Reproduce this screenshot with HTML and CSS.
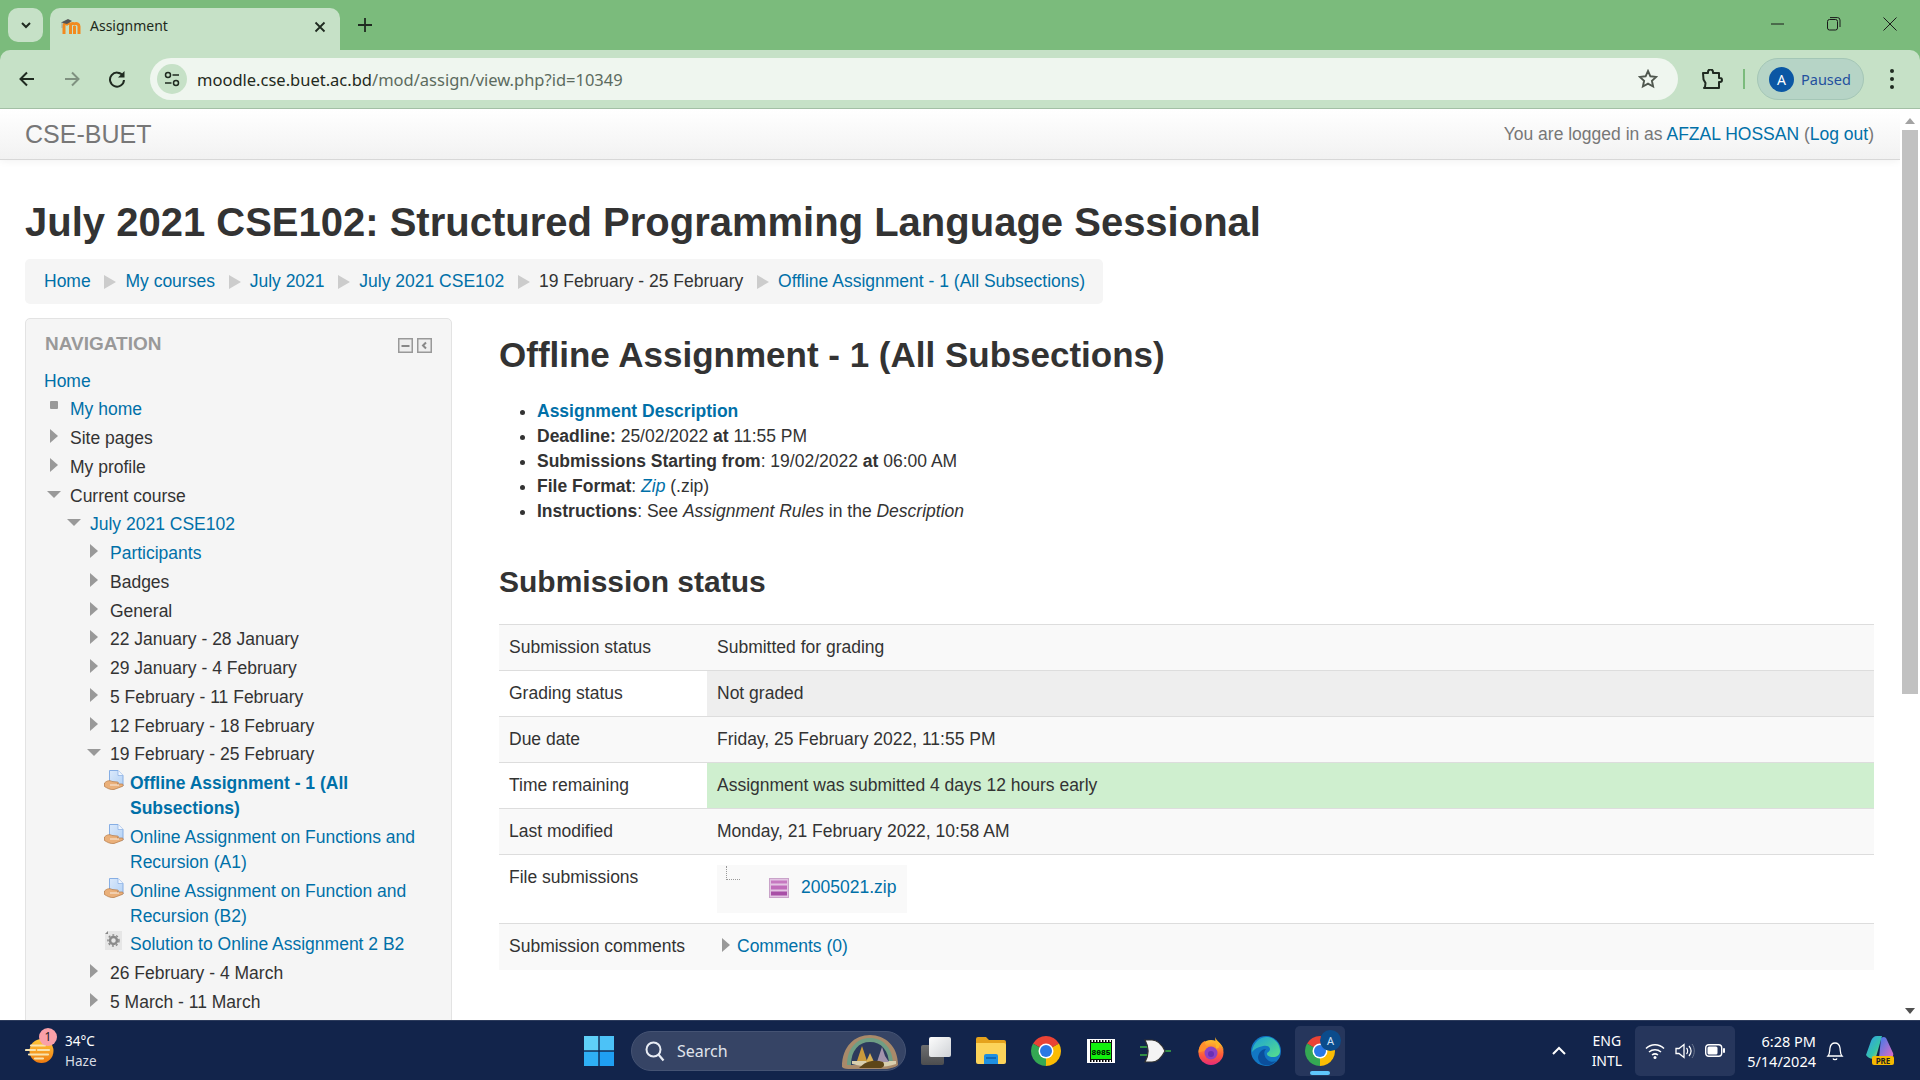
FILE: index.html
```html
<!DOCTYPE html>
<html lang="en">
<head>
<meta charset="utf-8">
<title>Assignment</title>
<link rel="stylesheet" href="styles.css">
</head>
<body>
<svg class="defs" width="0" height="0">
  <defs>
    <linearGradient id="sun" x1="0" y1="0" x2="0" y2="1"><stop offset="0" stop-color="#ffc93a"/><stop offset="1" stop-color="#ee7a10"/></linearGradient>
    <linearGradient id="paper" x1="0" y1="0" x2="1" y2="1"><stop offset="0" stop-color="#dbe9fb"/><stop offset="1" stop-color="#b4d2f5"/></linearGradient>
    <linearGradient id="front" x1="0" y1="0" x2="1" y2="1"><stop offset="0" stop-color="#fdfdfd"/><stop offset="1" stop-color="#cfd2d6"/></linearGradient>
    <linearGradient id="back" x1="0" y1="0" x2="0" y2="1"><stop offset="0" stop-color="#6d6e70"/><stop offset="1" stop-color="#4c4d4f"/></linearGradient>
    <linearGradient id="cpblue" x1="0" y1="0" x2="1" y2="1"><stop offset="0" stop-color="#2f9bf0"/><stop offset=".6" stop-color="#36c4a8"/><stop offset="1" stop-color="#e2d84a"/></linearGradient>
    <linearGradient id="cppink" x1="0" y1="0" x2="1" y2="1"><stop offset="0" stop-color="#3a7bea"/><stop offset="1" stop-color="#e66bc4"/></linearGradient>
    <linearGradient id="edgeg" x1="0" y1="0" x2="1" y2="1"><stop offset="0" stop-color="#1a9fd8"/><stop offset="1" stop-color="#58e08a"/></linearGradient>
    <linearGradient id="foxg" x1="0" y1="0" x2="0" y2="1"><stop offset="0" stop-color="#ffc02c"/><stop offset=".6" stop-color="#ff5a3a"/><stop offset="1" stop-color="#e62b7a"/></linearGradient>
  </defs>
  <symbol id="chrome" viewBox="4 4 40 40">
    <path fill="#ea4335" d="M24 24L6.680 14A20 20 0 0 1 41.320 14Z"/>
    <path fill="#fbbc04" d="M24 24L41.320 14A20 20 0 0 1 24 44Z"/>
    <path fill="#34a853" d="M24 24L24 44A20 20 0 0 1 6.680 14Z"/>
    <circle cx="24" cy="24" r="10" fill="#fff"/>
    <circle cx="24" cy="24" r="8" fill="#2a78e4"/>
  </symbol>
  <symbol id="assign" viewBox="0 0 20 20">
    <path fill="url(#paper)" stroke="#86aee4" d="M5.500.5H14L19 5.500V16H5.500Z"/>
    <path fill="#f2f7fe" stroke="#86aee4" stroke-width=".7" d="M14 .5V5.500H19"/>
    <path fill="#eab07a" stroke="#b5763f" stroke-width=".7" d="M.5 13C3 10.500 6 10 8 11.500L13 12C15 12 15 14 13 14H18C20 14.500 19.500 16 18 16.500L10 19.500C6 20 3 18 .5 16.500Z"/>
    <path d="M6 15h9" stroke="#fff" stroke-width=".8"/>
  </symbol>
</svg>
<div class="browser">
  <div class="tabstrip">
    <div class="tab-search"><svg width="14" height="14" viewBox="0 0 14 14"><path d="M3 5l4 4 4-4" fill="none" stroke="#1f2a20" stroke-width="2"/></svg></div>
    <div class="tab">
      <svg class="favicon" width="21" height="20" viewBox="0 0 21 20">
        <path d="M4 17V8.500c0-2 2-2.500 3-1.500c1-1 2.500-1 3 .5M10.500 17V9c0-2.500 2.500-3 4-2 2-1 4.500 0 4.500 2.500V17M14.500 9v8" fill="none" stroke="#f28a1e" stroke-width="3"/>
        <path d="M1 5.500L8 2l4 2-5 3z" fill="#555"/><path d="M2 5.500V11" stroke="#999" stroke-width=".8"/>
      </svg>
      <span class="tab-title">Assignment</span>
      <svg class="tab-close" width="12" height="12" viewBox="0 0 12 12"><path d="M1.500 1.500l9 9m0-9l-9 9" stroke="#1f2a20" stroke-width="1.800"/></svg>
    </div>
    <svg class="tab-new" width="14" height="14" viewBox="0 0 14 14"><path d="M7 0v14M0 7h14" stroke="#1f2a20" stroke-width="1.800"/></svg>
    <div class="winctl">
      <svg width="14" height="14" viewBox="0 0 14 14"><path d="M0 7h13" stroke="#1a1a1a"/></svg>
      <svg width="14" height="14" viewBox="0 0 14 14"><rect x=".5" y="2.500" width="10" height="10.500" rx="2" fill="none" stroke="#1a1a1a"/><path d="M3 .6h7.500a2.500 2.500 0 0 1 2.500 2.500V10" fill="none" stroke="#1a1a1a"/></svg>
      <svg width="14" height="14" viewBox="0 0 14 14"><path d="M.5.500l13 13m0-13l-13 13" stroke="#1a1a1a"/></svg>
    </div>
  </div>
  <div class="toolbar">
    <svg class="nav-ic" width="18" height="18" viewBox="0 0 18 18"><path d="M16 9H3M9 2.500L2.500 9 9 15.500" fill="none" stroke="#1f2a20" stroke-width="2"/></svg>
    <svg class="nav-ic" width="18" height="18" viewBox="0 0 18 18"><path d="M2 9h13M9 2.500L15.500 9 9 15.500" fill="none" stroke="#7f9180" stroke-width="2"/></svg>
    <svg class="nav-ic" width="18" height="18" viewBox="0 0 18 18"><path d="M15 6a7 7 0 1 0 1 4" fill="none" stroke="#1f2a20" stroke-width="2"/><path d="M16.500 1v6.500H10z" fill="#1f2a20"/></svg>
    <div class="omnibox">
      <div class="siteinfo"><svg width="16" height="16" viewBox="0 0 16 16"><circle cx="4" cy="4" r="2.500" fill="none" stroke="#1f2a20" stroke-width="1.500"/><path d="M8.500 4H15M1 12h6.500" stroke="#1f2a20" stroke-width="1.500"/><circle cx="12" cy="12" r="2.500" fill="none" stroke="#1f2a20" stroke-width="1.500"/></svg></div>
      <span class="url"><span class="url-host">moodle.cse.buet.ac.bd</span>/mod/assign/view.php?id=10349</span>
      <svg class="star" width="20" height="20" viewBox="0 0 20 20"><path d="M10 2l2.400 5.300 5.800.6-4.300 3.900 1.200 5.700L10 14.600 4.900 17.500l1.200-5.700L1.800 7.900l5.800-.6z" fill="none" stroke="#50584f" stroke-width="1.900"/></svg>
    </div>
    <svg class="ext" width="22" height="20" viewBox="0 0 22 20"><path d="M2 4h5V3a2.500 2.500 0 0 1 5 0v1h6v5h1a2 2 0 0 1 0 4h-1v6H3l1-1 .5-4-2-3.500z" fill="none" stroke="#1f2a20" stroke-width="2" stroke-linejoin="round"/></svg>
    <div class="divider"></div>
    <div class="profile"><span class="avatar">A</span><span class="paused">Paused</span></div>
    <div class="menu-dots"><i></i><i></i><i></i></div>
  </div>
</div>
<div class="viewport">
  <div class="page">
    <header class="navbar">
      <a class="brand">CSE-BUET</a>
      <span class="login">You are logged in as <a>AFZAL HOSSAN</a> (<a>Log out</a>)</span>
    </header>
    <div class="wrap">
      <h1 class="title">July 2021 CSE102: Structured Programming Language Sessional</h1>
      <nav class="crumbs">
        <a>Home</a><i class="sep"></i><a>My courses</a><i class="sep"></i><a>July 2021</a><i class="sep"></i><a>July 2021 CSE102</a><i class="sep"></i><span>19 February - 25 February</span><i class="sep"></i><a>Offline Assignment - 1 (All Subsections)</a>
      </nav>
      <div class="columns">
        <aside class="block">
          <div class="block-head">
            <span class="block-title">NAVIGATION</span>
            <span class="block-ctl">
              <svg width="15" height="15" viewBox="0 0 15 15"><rect x=".75" y=".75" width="13.500" height="13.500" fill="#eee" stroke="#999" stroke-width="1.500"/><path d="M3.500 8h8" stroke="#888" stroke-width="2"/></svg>
              <svg width="15" height="15" viewBox="0 0 15 15"><rect x=".75" y=".75" width="13.500" height="13.500" fill="#eee" stroke="#999" stroke-width="1.500"/><path d="M9 4.500L6 7.500l3 3" fill="none" stroke="#888" stroke-width="2"/></svg>
            </span>
          </div>
          <div class="tree-home"><a>Home</a></div>
          <ul class="tree">
            <li class="row"><i class="mark bullet"></i><a>My home</a></li>
            <li class="row"><i class="mark right"></i><span>Site pages</span></li>
            <li class="row"><i class="mark right"></i><span>My profile</span></li>
            <li class="row"><i class="mark down"></i><span>Current course</span></li>
            <li>
              <ul class="tree">
                <li class="row"><i class="mark down"></i><a>July 2021 CSE102</a></li>
                <li>
                  <ul class="tree">
                    <li class="row"><i class="mark right"></i><a>Participants</a></li>
                    <li class="row"><i class="mark right"></i><span>Badges</span></li>
                    <li class="row"><i class="mark right"></i><span>General</span></li>
                    <li class="row"><i class="mark right"></i><span>22 January - 28 January</span></li>
                    <li class="row"><i class="mark right"></i><span>29 January - 4 February</span></li>
                    <li class="row"><i class="mark right"></i><span>5 February - 11 February</span></li>
                    <li class="row"><i class="mark right"></i><span>12 February - 18 February</span></li>
                    <li class="row"><i class="mark down"></i><span>19 February - 25 February</span></li>
                    <li>
                      <ul class="tree">
                        <li class="row"><svg class="act"><use href="#assign"/></svg><a class="strong">Offline Assignment - 1 (All Subsections)</a></li>
                        <li class="row"><svg class="act"><use href="#assign"/></svg><a>Online Assignment on Functions and Recursion (A1)</a></li>
                        <li class="row"><svg class="act"><use href="#assign"/></svg><a>Online Assignment on Function and Recursion (B2)</a></li>
                        <li class="row"><svg class="act" viewBox="0 0 20 20"><path d="M1 3L4 0H18V19H1Z" fill="#e6e6e6"/><path d="M1 3L4 0V3Z" fill="#888"/><circle cx="9.500" cy="9.500" r="3.500" fill="none" stroke="#8a8a8a" stroke-width="2.500"/><circle cx="9.500" cy="9.500" r="5.500" fill="none" stroke="#8a8a8a" stroke-width="1.500" stroke-dasharray="2 2"/></svg><a>Solution to Online Assignment 2 B2</a></li>
                      </ul>
                    </li>
                    <li class="row"><i class="mark right"></i><span>26 February - 4 March</span></li>
                    <li class="row"><i class="mark right"></i><span>5 March - 11 March</span></li>
                  </ul>
                </li>
              </ul>
            </li>
          </ul>
        </aside>
        <main class="main">
          <h2 class="assign-title">Offline Assignment - 1 (All Subsections)</h2>
          <ul class="desc">
            <li><a class="strong">Assignment Description</a></li>
            <li><b>Deadline:</b> 25/02/2022 <b>at</b> 11:55 PM</li>
            <li><b>Submissions Starting from</b>: 19/02/2022 <b>at</b> 06:00 AM</li>
            <li><b>File Format</b>: <a><em>Zip</em></a> (.zip)</li>
            <li><b>Instructions</b>: See <em>Assignment Rules</em> in the <em>Description</em></li>
          </ul>
          <h3 class="sub-title">Submission status</h3>
          <table class="status">
            <tr class="odd"><td class="c1">Submission status</td><td>Submitted for grading</td></tr>
            <tr class="even"><td class="c1">Grading status</td><td class="grey">Not graded</td></tr>
            <tr class="odd"><td class="c1">Due date</td><td>Friday, 25 February 2022, 11:55 PM</td></tr>
            <tr class="even"><td class="c1">Time remaining</td><td class="green">Assignment was submitted 4 days 12 hours early</td></tr>
            <tr class="odd"><td class="c1">Last modified</td><td>Monday, 21 February 2022, 10:58 AM</td></tr>
            <tr class="even"><td class="c1 top">File submissions</td><td class="file-cell">
              <div class="filebox">
                <i class="treeline"></i>
                <svg class="zip" width="20" height="20" viewBox="0 0 20 20"><rect x=".5" y=".5" width="19" height="19" fill="#e3c4e3" stroke="#c9a3c9"/><path d="M2 2.500h16v3H2z" fill="#c678c0"/><path d="M2 7.500h16v4H2z" fill="#c06cba"/><path d="M2 13.500h16v4H2z" fill="#a84fa6"/></svg>
                <a>2005021.zip</a>
              </div>
            </td></tr>
            <tr class="odd"><td class="c1">Submission comments</td><td><i class="mark right comment-mark"></i><a>Comments (0)</a></td></tr>
          </table>
        </main>
      </div>
    </div>
  </div>
  <div class="scrollbar">
    <i class="sb-up"></i>
    <div class="sb-thumb"></div>
    <i class="sb-down"></i>
  </div>
</div>
<footer class="taskbar">
  <div class="weather">
    <svg class="w-icon" width="29" height="24" viewBox="0 0 29 24"><circle cx="16.500" cy="12" r="12" fill="url(#sun)"/><path d="M6 6.500h14M1 11h9M13 11h11M4 15.500h19M10 19.500h8" stroke="#f8e3ae" stroke-width="2.200" stroke-linecap="round"/></svg>
    <span class="w-badge">1</span>
    <div class="w-text"><span>34°C</span><span class="w-dim">Haze</span></div>
  </div>
  <div class="tb-center">
    <svg class="win" width="30" height="30" viewBox="0 0 30 30"><rect width="14.300" height="14.300" fill="#5fd0f8"/><rect x="15.700" width="14.300" height="14.300" fill="#4cc2f7"/><rect y="15.700" width="14.300" height="14.300" fill="#2fb0f5"/><rect x="15.700" y="15.700" width="14.300" height="14.300" fill="#1f9ff2"/></svg>
    <div class="search">
      <svg width="22" height="22" viewBox="0 0 22 22"><circle cx="9.500" cy="9.500" r="7" fill="none" stroke="#e8ecf4" stroke-width="2"/><path d="M14.500 14.500l5 6" stroke="#e8ecf4" stroke-width="2.200"/></svg>
      <span class="search-label">Search</span>
      <svg class="search-art" width="58" height="35" viewBox="0 0 58 35"><path d="M1 33C1 12 14 1 29 1s28 11 28 30c-3 3-8 3-11 4H10C6 35 3 35 1 33Z" fill="#a98a6a"/><path d="M6 31C6 14 16 4 29 4s23 10 23 27Z" fill="#6f9e84"/><path d="M10 31C10 16 18 8 29 8s19 8 19 23Z" fill="#2c3a5c"/><path d="M11 27h44v3c-10 4-30 4-44 0z" fill="#d9cfae"/><path d="M16 27l5-15 5 15z" fill="#c99a3c"/><path d="M25 28l4-9 4 9z" fill="#d8b055"/><path d="M36 28l2-6 3-9 3 9 4 6z" fill="#a294ac"/><path d="M18 34c6-7 16-9 24-6 2 3 1 5-2 6z" fill="#5e4618"/></svg>
    </div>
    <span class="tb-slot"><svg width="30" height="28" viewBox="0 0 30 28"><rect x="0" y="8" width="23" height="20" rx="2" fill="url(#back)"/><rect x="8" y="0" width="22" height="20" rx="2" fill="url(#front)"/></svg></span>
    <span class="tb-slot"><svg width="30" height="27" viewBox="0 0 30 27"><path d="M0 2a2 2 0 0 1 2-2h8l3 3h15a2 2 0 0 1 2 2v5H0z" fill="#e5a21c"/><path d="M0 6h28a2 2 0 0 1 2 2v17a2 2 0 0 1-2 2H2a2 2 0 0 1-2-2z" fill="#fcd35a"/><path d="M8 19a2 2 0 0 1 2-2h10a2 2 0 0 1 2 2v8H8z" fill="#1f8fe0"/><path d="M10 21h10" stroke="#0e5ea8" stroke-width="1.500"/></svg></span>
    <span class="tb-slot"><svg width="30" height="30"><use href="#chrome"/></svg></span>
    <span class="tb-slot"><svg width="28" height="24" viewBox="0 0 28 24"><rect width="28" height="24" fill="#fff"/><path d="M3 2h22M3 22h22" stroke="#000" stroke-width="2" stroke-dasharray="1.500 1.500"/><rect x="3.500" y="3.500" width="21" height="17" fill="#12ef0e" stroke="#111"/><text class="chip-text" x="14" y="15.500">8085</text></svg></span>
    <span class="tb-slot"><svg width="31" height="24" viewBox="0 0 31 24"><path d="M0 8h10M0 16h10M25 12h6" stroke="#3cb043" stroke-width="1.500"/><path d="M5 1h7c6 0 10 5 13 11-3 6-7 11-13 11H5c4-7 4-15 0-22z" fill="#f4f4f4" stroke="#333" stroke-width="1.200"/></svg></span>
    <span class="tb-slot"><svg width="28" height="28" viewBox="0 0 28 28"><circle cx="14" cy="15.500" r="12.500" fill="url(#foxg)"/><path d="M18 0c1 4 9 7 9 15.500 0-4-3-7-5-8 1 3-1 4-3 4z" fill="#ffb427"/><path d="M1.500 15.500C1.500 9 5 5 8 4c-.5 3 .5 4.500 2 5.500 2-1 5-1 7 1-3 0-5 2-5 2z" fill="#ff8f2c"/><circle cx="14" cy="16" r="6.500" fill="#8e42c4"/><circle cx="14" cy="17" r="3" fill="#6a2fb5"/></svg></span>
    <span class="tb-slot"><svg width="30" height="30" viewBox="0 0 30 30"><circle cx="15" cy="15" r="15" fill="#1277c4"/><path d="M1 16C2 6 10 0 17 1c7 1 12 7 12 14 0 4-3 6-7 6-3 0-6-1-6-3 0-2 3-2 3-5 0-3-4-4-7-3-5 1-9 3-11 6z" fill="url(#edgeg)"/><path d="M7 21c1-5 4-8 8-8-3 3-2 9 3 12 2 1 5 1 7 0-3 3-7 5-11 4-4 0-7-4-7-8z" fill="#0b4f9c"/></svg></span>
    <span class="tb-active"><svg width="30" height="30"><use href="#chrome"/></svg><span class="tb-avatar">A</span><i class="tb-running"></i></span>
  </div>
  <div class="tray">
    <svg class="caret" width="14" height="9" viewBox="0 0 14 9"><path d="M1 8l6-6 6 6" fill="none" stroke="#fff" stroke-width="2"/></svg>
    <div class="lang"><span>ENG</span><span>INTL</span></div>
    <div class="sysbox">
      <svg width="20" height="16" viewBox="0 0 20 16"><path d="M1 5.500c5-5 13-5 18 0M4 9c3.500-3 8.500-3 12 0M7 12c2-1.500 4-1.500 6 0" fill="none" stroke="#fff" stroke-width="1.500"/><circle cx="10" cy="14.500" r="1.500" fill="#fff"/></svg>
      <svg width="20" height="18" viewBox="0 0 20 18"><path d="M1 6.500h3L9 2.500v13L4 11.500H1z" fill="none" stroke="#fff" stroke-width="1.300"/><path d="M11.500 6c1.500 1.500 1.500 4.500 0 6M14 4c2.500 3 2.500 7 0 10" fill="none" stroke="#fff" stroke-width="1.200"/><path d="M17 2c3 4 3 10 0 14" fill="none" stroke="#6d7890" stroke-width="1"/></svg>
      <svg width="20" height="13" viewBox="0 0 20 13"><rect x=".7" y=".7" width="16" height="11.600" rx="3" fill="none" stroke="#fff" stroke-width="1.400"/><rect x="2.500" y="2.500" width="10" height="8" rx="1.500" fill="#fff"/><rect x="18" y="4" width="2" height="5" rx="1" fill="#fff"/></svg>
    </div>
    <div class="clock"><span>6:28 PM</span><span>5/14/2024</span></div>
    <svg class="bell" width="18" height="20" viewBox="0 0 18 20"><path d="M2 15c2-2 1.500-5 2-8 .5-3 2.500-5 5-5s4.500 2 5 5c.5 3 0 6 2 8z" fill="none" stroke="#fff" stroke-width="1.300"/><path d="M7 17.500c.5 1.500 3.500 1.500 4 0" fill="none" stroke="#fff" stroke-width="1.300"/></svg>
    <span class="copilot">
      <svg width="30" height="26" viewBox="0 0 30 26"><path d="M1 19L6 5c1-3 3-5 6-5h5L11 21c-1 3-8 2-10-2z" fill="url(#cpblue)"/><path d="M16 2c3-2 5-1 6 2l6 13c1 3-1 5-4 5H14z" fill="url(#cppink)"/></svg>
      <span class="pre">PRE</span>
    </span>
  </div>
</footer>
</body>
</html>
```
FILE: styles.css
```css
* { box-sizing: border-box; }
html, body { margin: 0; height: 100%; overflow: hidden; }
body {
  display: flex;
  flex-direction: column;
  height: 1080px;
  font-family: "Liberation Sans", Arial, sans-serif;
  font-size: 17.5px;
  line-height: 25px;
  color: #333;
  background: #fff;
}
.defs { position: absolute; }
a { color: #0070a8; text-decoration: none; }
i { font-style: normal; }

/* Browser chrome */
.browser { flex: none; background: #7bbb7c; }
.tabstrip { height: 50px; display: flex; align-items: flex-start; padding: 8px 0 0 8px; }
.tab-search {
  width: 35px; height: 34px; border-radius: 10px; background: #c6e1c7;
  display: flex; align-items: center; justify-content: center; margin-right: 7px;
}
.tab {
  width: 290px; height: 42px; background: #c6e1c7; border-radius: 10px 10px 0 0;
  display: flex; align-items: center; padding: 0 14px 4px 10px; position: relative;
}
.favicon { flex: none; margin-right: 9px; }
.tab-title { flex: 1; font: 14px/18px "Noto Sans", sans-serif; color: #1f2a20; padding-bottom: 3px; }
.tab-new { margin: 10px 0 0 18px; }
.winctl { margin-left: auto; display: flex; gap: 42px; padding: 9px 23px 0 0; }
.toolbar {
  height: 59px; background: #c6e1c7; border-radius: 10px 10px 0 0;
  border-bottom: 1px solid #a3bfa5;
  display: flex; align-items: center; padding: 0 0 0 18px;
}
.nav-ic { flex: none; margin-right: 27px; }
.nav-ic:nth-child(3) { margin-right: 24px; }
.omnibox {
  width: 1528px; height: 42px; border-radius: 21px; background: #eff6ef;
  display: flex; align-items: center; padding: 0 20px 0 7px; flex: none;
}
.siteinfo {
  width: 30px; height: 30px; border-radius: 50%; background: #c6e1c7;
  display: flex; align-items: center; justify-content: center; margin-right: 10px;
}
.url { flex: 1; font: 16.500px "Noto Sans", sans-serif; color: #5c6b5e; }
.url-host { color: #1f2a20; }
.ext { flex: none; margin-left: 23px; }
.divider { width: 2px; height: 20px; background: #7bbb7c; margin: 0 12px 0 20px; flex: none; }
.profile {
  width: 107px; height: 42px; border-radius: 21px; background: #b6d4c6; border: 1px solid #a4c6b6;
  display: flex; align-items: center; padding-left: 11px; flex: none;
}
.avatar {
  width: 25px; height: 25px; border-radius: 50%; background: #0b57a4; color: #fff;
  font: 14px/25px "Noto Sans", sans-serif; text-align: center; margin-right: 7px;
}
.paused { font: 14.500px "Noto Sans", sans-serif; color: #23509e; }
.menu-dots { display: flex; flex-direction: column; gap: 4px; margin-left: 26px; }
.menu-dots i { width: 4px; height: 4px; border-radius: 50%; background: #1f2a20; }

/* Page */
.viewport { flex: 1; min-height: 0; display: flex; overflow: hidden; }
.page { flex: 1; min-width: 0; overflow: hidden; }
.navbar {
  height: 51px; display: flex; align-items: center; justify-content: space-between;
  padding: 0 26px 0 25px;
  background: linear-gradient(#fff, #f2f2f2);
  border-bottom: 1px solid #d8d8d8;
  box-shadow: 0 1px 8px rgba(0, 0, 0, .06);
}
.brand { font-size: 25px; color: #777; }
.login { color: #777; }
.wrap { padding: 0 26px 0 25px; }
.title { font-size: 40px; line-height: 50px; font-weight: bold; margin: 37px 0 12px; color: #333; }
.crumbs {
  display: inline-flex; align-items: center; height: 45px; padding: 0 18px 0 19px;
  background: #f5f5f5; border-radius: 5px; vertical-align: top;
}
.sep {
  width: 0; height: 0; margin: 0 9px 0 13.750px;
  border-style: solid; border-width: 7px 0 7px 12px; border-color: transparent transparent transparent #ccc;
}
.columns { display: flex; align-items: flex-start; gap: 47px; margin-top: 14px; }
.block {
  flex: none; width: 427px; padding: 0 19px 20px; background: #f5f5f5;
  border: 1px solid #e3e3e3; border-radius: 5px;
}
.block-head { height: 48px; margin-bottom: 2px; display: flex; align-items: center; justify-content: space-between; }
.block-title { font-size: 19px; font-weight: bold; color: #999; }
.block-ctl { display: flex; gap: 4px; padding: 5px 0 0; }
.block-ctl svg { display: block; }
.tree-home { height: 28.450px; margin-left: -1px; }
.tree { list-style: none; margin: 0; padding: 0 0 0 20px; }
.block > .tree { padding-left: 0; }
.row { display: flex; align-items: flex-start; padding-bottom: 3.750px; }
.row a, .row span { flex: 1; }
.strong { font-weight: bold; }
.mark { flex: none; display: block; width: 25px; height: 14px; position: relative; }
.mark::before { content: ""; position: absolute; }
.mark.right::before {
  left: 5px; top: 3px; border-style: solid; border-width: 7px 0 7px 8px;
  border-color: transparent transparent transparent #999;
}
.mark.down::before {
  left: 2px; top: 7px; border-style: solid; border-width: 7px 7px 0;
  border-color: #999 transparent transparent;
}
.mark.bullet::before { left: 5px; top: 4px; width: 8px; height: 8px; background: #999; border-radius: 1px; }
.act { flex: none; width: 20px; height: 20px; margin: -1px 6px 0 -1px; }
.main { flex: 1; min-width: 0; }
.assign-title { font-size: 35px; line-height: 50px; font-weight: bold; margin: 12px 0 0; }
.desc { margin: 19px 0 0; padding: 0 0 0 38px; }
.sub-title { font-size: 30px; line-height: 50px; font-weight: bold; margin: 33px 0 0; }
.status { width: 100%; border-collapse: collapse; margin-top: 17px; table-layout: fixed; }
.status td { padding: 10px; height: 46px; border-top: 1px solid #ddd; vertical-align: top; }
.status .c1 { width: 208px; }
.odd td { background: #f9f9f9; }
.even td { background: #fff; }
.status .grey { background: #eee; }
.status .green { background: #cfefcf; }
.status .file-cell { padding-bottom: 10px; }
.filebox {
  display: flex; align-items: center; width: 190px; height: 48px; padding: 0 10px 3px 52px;
  background: #f9f9f9; position: relative;
}
.treeline {
  position: absolute; left: 9px; top: 1px; width: 14px; height: 14px;
  border-left: 1px dotted #999; border-bottom: 1px dotted #999;
}
.zip { flex: none; margin-right: 12px; }
.comment-mark { display: inline-block; width: 20px; height: 14px; vertical-align: top; margin-top: 1px; }
.comment-mark.right::before { left: 5px; }

/* Scrollbar */
.scrollbar { flex: none; width: 20px; background: #fff; display: flex; flex-direction: column; align-items: center; }
.sb-up, .sb-down { flex: none; width: 0; height: 0; border-style: solid; border-color: transparent; }
.sb-up { border-width: 0 5px 6px; border-bottom-color: #a3a3a3; margin: 9px 0 6px; }
.sb-thumb { width: 16px; height: 564px; background: #c1c1c1; }
.sb-down { border-width: 6px 5px 0; border-top-color: #505050; margin: auto 0 6px; }

/* Taskbar */
.taskbar {
  flex: none; height: 60px; background: #12244b; border-top: 1px solid #2c3b5c;
  display: flex; align-items: center; color: #fff;
  font-family: "Noto Sans", sans-serif; font-size: 14px; line-height: 20px;
}
.weather { flex: none; width: 584px; display: flex; align-items: center; padding-left: 25px; position: relative; }
.w-icon { flex: none; }
.w-badge {
  position: absolute; left: 39px; top: -3px; width: 18px; height: 18px; border-radius: 50%;
  background: #f9a0a8; color: #222; font-size: 12px; line-height: 18px; text-align: center;
}
.w-text { display: flex; flex-direction: column; margin-left: 11px; font-size: 13.500px; }
.w-dim { color: #d8dce4; }
.tb-center { flex: none; display: flex; align-items: center; }
.win { flex: none; margin-right: 17px; }
.search {
  width: 275px; height: 40px; border-radius: 20px; background: #364465; border: 1px solid #455373;
  display: flex; align-items: center; padding-left: 12px; position: relative; margin-right: 2px;
}
.search-label { margin-left: 11px; font-size: 16px; color: #e0e4ec; }
.search-art { position: absolute; right: 6px; top: 2px; }
.tb-slot { flex: none; width: 55px; height: 40px; display: flex; align-items: center; justify-content: center; }
.chip-text { font: bold 8px "Liberation Mono", monospace; text-anchor: middle; fill: #000; }
.tb-active {
  flex: none; width: 50px; height: 50px; margin-left: 2px; border-radius: 5px; background: #26365c;
  display: flex; align-items: center; justify-content: center; position: relative;
}
.tb-avatar {
  position: absolute; right: 4px; top: 4px; width: 21px; height: 21px; border-radius: 50%;
  background: #0b4c8c; color: #cfe0f5; font-size: 11px; line-height: 21px; text-align: center;
}
.tb-running { position: absolute; left: 15px; bottom: 1px; width: 20px; height: 4px; border-radius: 2px; background: #5fc6fb; }
.tray { flex: 1; display: flex; align-items: center; justify-content: flex-end; padding-right: 25px; }
.caret { flex: none; margin-right: 26px; }
.lang { display: flex; flex-direction: column; align-items: center; margin-right: 13px; font-size: 14px; line-height: 20px; }
.sysbox {
  width: 100px; height: 50px; border-radius: 5px; background: #26365c;
  display: flex; align-items: center; justify-content: center; gap: 10px; margin-right: 12px;
}
.clock { display: flex; flex-direction: column; align-items: flex-end; font-size: 14.500px; line-height: 20px; margin-right: 10px; }
.bell { flex: none; margin-right: 21px; }
.copilot { width: 30px; height: 30px; position: relative; display: block; }
.pre {
  position: absolute; left: 7px; bottom: 1px; width: 22px; height: 9px; border-radius: 2px; background: #f5b800;
  color: #222; font: bold 8px/9px "Noto Sans", sans-serif; text-align: center;
}
```
